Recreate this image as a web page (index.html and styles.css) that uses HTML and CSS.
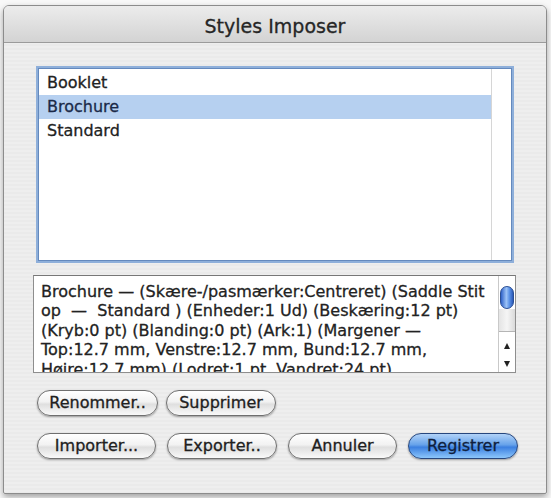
FILE: index.html
```html
<!DOCTYPE html>
<html lang="fr">
<head>
<meta charset="utf-8">
<title>Styles Imposer</title>
<link rel="stylesheet" href="styles.css">
</head>
<body>
<div class="window">
  <div class="titlebar">Styles Imposer</div>
  <div class="content">
    <div class="listbox">
      <ul class="items">
        <li class="item">Booklet</li>
        <li class="item selected">Brochure</li>
        <li class="item">Standard</li>
      </ul>
      <div class="list-scroller"></div>
    </div>
    <div class="details">
      <div class="details-text"><div class="line">Brochure — (Skære-/pasmærker:Centreret) (Saddle Stit</div><div class="line">op  —  Standard ) (Enheder:1 Ud) (Beskæring:12 pt)</div><div class="line">(Kryb:0 pt) (Blanding:0 pt) (Ark:1) (Margener —</div><div class="line">Top:12.7 mm, Venstre:12.7 mm, Bund:12.7 mm,</div><div class="line">Højre:12.7 mm) (Lodret:1 pt, Vandret:24 pt)</div></div>
      <div class="scrollbar">
        <div class="sb-top"></div>
        <div class="sb-thumb"></div>
        <div class="sb-track"></div>
        <div class="sb-arrows"><span class="arrow up"></span><span class="arrow down"></span></div>
      </div>
    </div>
    <div class="btn-row row1">
      <button class="btn btn-rename">Renommer..</button>
      <button class="btn btn-delete">Supprimer</button>
    </div>
    <div class="btn-row row2">
      <button class="btn btn-import">Importer...</button>
      <button class="btn btn-export">Exporter..</button>
      <button class="btn btn-cancel">Annuler</button>
      <button class="btn btn-save btn-default">Registrer</button>
    </div>
  </div>
</div>
</body>
</html>
```

FILE: styles.css
```css
html, body {
  margin: 0;
  height: 100%;
}
body {
  background: #f8f8f8;
  font-family: "DejaVu Sans", "Noto Sans", sans-serif;
  overflow: hidden;
}
.window {
  margin: 5px 4px 0 3px;
  height: 489px;
  box-sizing: border-box;
  border: 1px solid #8c8c8c;
  border-radius: 6px 6px 2px 2px;
  background: repeating-linear-gradient(#eeeeee 0 2px, #eaeaea 2px 4px);
  box-shadow: 0 3px 6px rgba(0, 0, 0, 0.35);
  display: flex;
  flex-direction: column;
  overflow: hidden;
}
.titlebar {
  height: 37px;
  box-sizing: border-box;
  padding-top: 5px;
  line-height: 31px;
  text-align: center;
  font-size: 19px;
  color: #262626;
  -webkit-text-stroke: 0.3px #262626;
  background: linear-gradient(#ececec, #d3d3d3);
  border-bottom: 1px solid #9b9b9b;
}
.content {
  flex: 1;
  display: flex;
  flex-direction: column;
}
.listbox {
  margin: 25px 34px 0 34px;
  height: 193px;
  box-sizing: border-box;
  border: 1px solid #6489bd;
  box-shadow: 0 0 0 2px #8eafda;
  background: #fff;
  display: flex;
}
.items {
  list-style: none;
  margin: 0;
  padding: 2px 0 0;
  flex: 1;
}
.item {
  height: 24px;
  line-height: 24px;
  padding-left: 8px;
  font-size: 16px;
  color: #222;
  -webkit-text-stroke: 0.3px #222;
}
.item.selected {
  background: #b6d0f0;
  color: #1b2a48;
  -webkit-text-stroke: 0.3px #1b2a48;
}
.list-scroller {
  width: 19px;
  border-left: 1px solid #d6d6d6;
}
.details {
  margin: 14px 30px 0 29px;
  height: 98px;
  box-sizing: border-box;
  border: 1px solid #8e8e8e;
  border-top-color: #777;
  background: #fff;
  display: flex;
}
.details-text {
  flex: 1;
  padding: 6px 0 0 7px;
  font-size: 16px;
  line-height: 19.4px;
  color: #222;
  -webkit-text-stroke: 0.3px #222;
  white-space: pre;
  overflow: hidden;
}
.scrollbar {
  width: 16px;
  border-left: 1px solid #c9c9c9;
  display: flex;
  flex-direction: column;
  background: #fff;
}
.sb-top {
  height: 10px;
}
.sb-thumb {
  height: 23px;
  box-sizing: border-box;
  margin: 0 1px;
  border-radius: 7px;
  border: 1px solid #2b4f94;
  background: linear-gradient(90deg, #2f62c8, #9cc3f7 45%, #5b92e6 70%, #2a58b8);
}
.sb-track {
  height: 22px;
  background: linear-gradient(90deg, #e4e4e4, #f5f5f5, #dadada);
  border-bottom: 1px solid #b5b5b5;
}
.sb-arrows {
  flex: 1;
  display: flex;
  flex-direction: column;
  align-items: center;
  padding-top: 11px;
  gap: 12px;
}
.arrow {
  width: 0;
  height: 0;
  border-left: 3.5px solid transparent;
  border-right: 3.5px solid transparent;
}
.arrow.up {
  border-bottom: 6px solid #222;
}
.arrow.down {
  border-top: 6px solid #222;
}
.btn-row {
  display: flex;
  margin: 17px 0 0 33px;
}
.row1 {
  gap: 8px;
}
.row2 {
  gap: 11px;
}
.btn {
  height: 26px;
  box-sizing: border-box;
  border: 1px solid #6f6f6f;
  border-radius: 13px;
  background: linear-gradient(#ffffff 0%, #f2f2f2 45%, #dfdfdf 55%, #f9f9f9 100%);
  box-shadow: 0 1px 2px rgba(0, 0, 0, 0.35);
  font: 16px "DejaVu Sans", "Noto Sans", sans-serif;
  color: #202020;
  -webkit-text-stroke: 0.3px #202020;
  padding: 0;
  line-height: 24px;
  text-align: center;
  white-space: nowrap;
}
.btn-rename { width: 121px; }
.btn-delete { width: 110px; }
.btn-import { width: 119px; }
.btn-export { width: 110px; }
.btn-cancel { width: 109px; }
.btn-save { width: 110px; }
.btn-default {
  border-color: #27477e;
  color: #0f1f3e;
  -webkit-text-stroke: 0.3px #0f1f3e;
  background: linear-gradient(#b2d3f8 0%, #66a2ea 45%, #3c80e0 55%, #8cc6fb 100%);
}
```
